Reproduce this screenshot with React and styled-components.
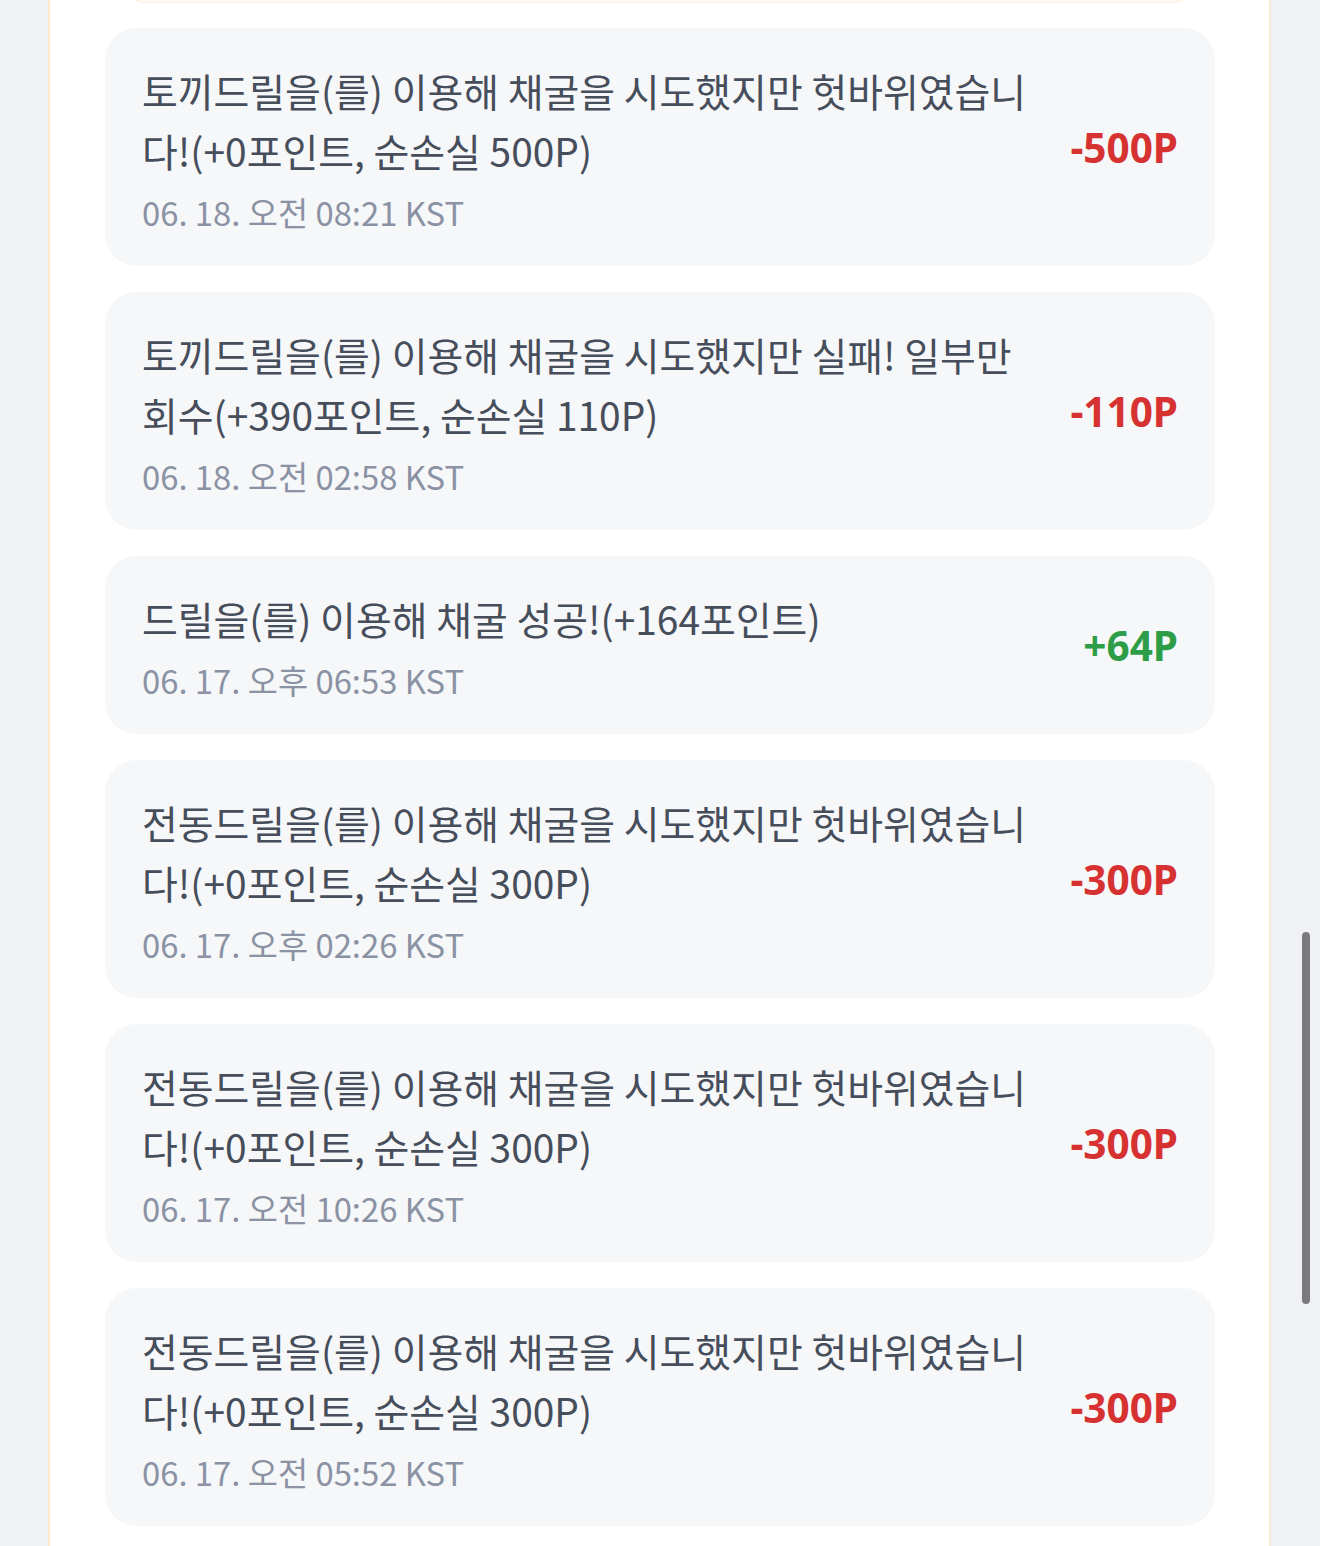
import React from "react";
import styled, { createGlobalStyle } from "styled-components";

const Global = createGlobalStyle`
  html, body { margin: 0; padding: 0; background: #f0f1f3; }
  body { font-family: "Noto Sans CJK KR", "Noto Sans", sans-serif; overflow: hidden; }
`;

const Page = styled.div`
  width: 1320px;
  height: 1546px;
  overflow: hidden;
  background: #f0f1f3;
  position: relative;
`;

const Panel = styled.div`
  margin-left: 48px;
  width: 1223px;
  box-sizing: border-box;
  min-height: 1546px;
  background: #ffffff;
  border-left: 2px solid #fbe7cc;
  border-right: 2px solid #f6ead6;
  padding: 0 54px 40px 55px;
  display: flex;
  flex-direction: column;
  gap: 26px;
`;

const Banner = styled.div`
  margin: -97px 18px -1px 15px;
  height: 100px;
  box-sizing: border-box;
  border-radius: 26px;
  background: #fffaf1;
  border: 1px solid #fdf0dc;
  border-left: 4px solid #f3a43a;
`;

const Card = styled.div`
  display: flex;
  align-items: center;
  justify-content: space-between;
  background: #f6f7f9;
  border-radius: 32px;
  padding: 32px 37px 32px 37px;
`;

const Body = styled.div`
  flex: 0 1 900px;
  display: flex;
  flex-direction: column;
  word-break: break-all;
`;

const Title = styled.div`
  font-size: 38.9px;
  line-height: 60px;
  color: #464d5b;
  font-weight: 400;
`;

const Date = styled.div`
  margin-top: 10px;
  font-size: 32.8px;
  line-height: 44px;
  color: #8a92a4;
`;

const Amount = styled.div`
  flex-shrink: 0;
  font-family: "Noto Sans", "Noto Sans CJK KR", sans-serif;
  font-weight: 700;
  font-size: 40.5px;
  color: ${(p) => (p.$positive ? "#2e9d47" : "#d63232")};
`;

const items = [
  { t: "토끼드릴을(를) 이용해 채굴을 시도했지만 헛바위였습니다!(+0포인트, 순손실 500P)", d: "06. 18. 오전 08:21 KST", a: "-500P" },
  { t: "토끼드릴을(를) 이용해 채굴을 시도했지만 실패! 일부만 회수(+390포인트, 순손실 110P)", d: "06. 18. 오전 02:58 KST", a: "-110P" },
  { t: "드릴을(를) 이용해 채굴 성공!(+164포인트)", d: "06. 17. 오후 06:53 KST", a: "+64P", pos: true },
  { t: "전동드릴을(를) 이용해 채굴을 시도했지만 헛바위였습니다!(+0포인트, 순손실 300P)", d: "06. 17. 오후 02:26 KST", a: "-300P" },
  { t: "전동드릴을(를) 이용해 채굴을 시도했지만 헛바위였습니다!(+0포인트, 순손실 300P)", d: "06. 17. 오전 10:26 KST", a: "-300P" },
  { t: "전동드릴을(를) 이용해 채굴을 시도했지만 헛바위였습니다!(+0포인트, 순손실 300P)", d: "06. 17. 오전 05:52 KST", a: "-300P" },
];

const Scrollbar = styled.div`
  position: absolute;
  right: 10px;
  top: 932px;
  width: 8px;
  height: 372px;
  border-radius: 4px;
  background: #7a7a7c;
`;

export default function App() {
  return (
    <Page>
      <Global />
      <Panel>
        <Banner />
        {items.map((it, i) => (
          <Card key={i}>
            <Body>
              <Title>{it.t}</Title>
              <Date>{it.d}</Date>
            </Body>
            <Amount $positive={it.pos}>{it.a}</Amount>
          </Card>
        ))}
      </Panel>
      <Scrollbar />
    </Page>
  );
}
